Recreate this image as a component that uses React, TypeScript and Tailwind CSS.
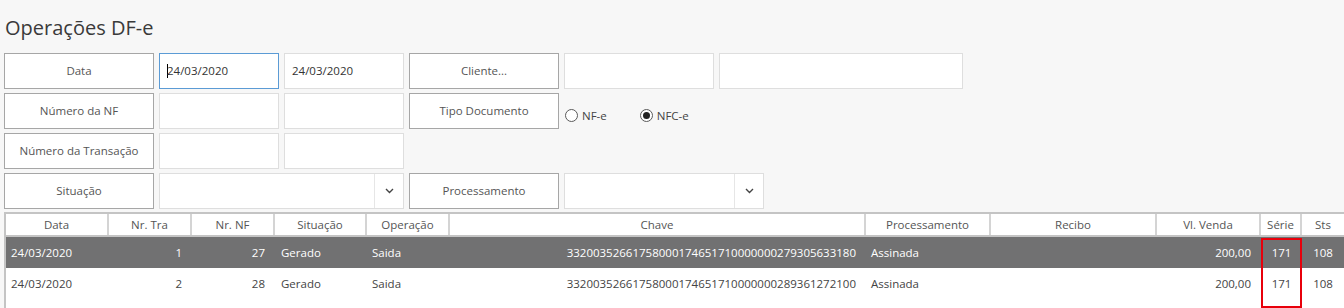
import React from "react"

const font = { fontFamily: '"Open Sans", "Noto Sans", sans-serif' }

const Label = ({ text, className = "" }: { text: string; className?: string }) => (
  <div
    className={`w-[150px] h-[36px] shrink-0 flex items-center justify-center bg-white border border-[#a6a6a6] text-[11.5px] text-[#555] ${className}`}
  >
    {text}
  </div>
)

const Input = ({ w, value, focused }: { w: string; value?: string; focused?: boolean }) => (
  <div
    className={`${w} h-[36px] shrink-0 flex items-center bg-white border ${
      focused ? "border-[#5b9bd5]" : "border-[#dedede]"
    } pl-[7px] text-[11.5px] text-[#333]`}
  >
    {focused && <span className="w-px h-[14px] bg-black -mr-px" />}
    {value}
  </div>
)

const Select = ({ w }: { w: string }) => (
  <div className={`${w} h-[36px] shrink-0 flex bg-white border border-[#dedede]`}>
    <div className="flex-1" />
    <div className="w-[29px] border-l border-[#e6e6e6] flex items-center justify-center">
      <svg width="9" height="6" viewBox="0 0 9 6">
        <polyline points="1,1 4.5,4.5 8,1" fill="none" stroke="#444" strokeWidth="1.4" />
      </svg>
    </div>
  </div>
)

const Radio = ({ label, checked }: { label: string; checked?: boolean }) => (
  <div className="flex items-center gap-[4px] text-[11.5px] text-[#444]">
    <span className="w-[13px] h-[13px] rounded-full border border-[#5a5a5a] bg-white flex items-center justify-center">
      {checked && <span className="w-[7px] h-[7px] rounded-full bg-[#222]" />}
    </span>
    {label}
  </div>
)

const cols = "grid-cols-[103px_83px_83px_92px_83px_416px_125px_166px_104px_41px_42px]"

const headers = ["Data", "Nr. Tra", "Nr. NF", "Situação", "Operação", "Chave", "Processamento", "Recibo", "Vl. Venda", "Série", "Sts"]

const align = [
  "justify-start pl-[5px]",
  "justify-end pr-[10px]",
  "justify-end pr-[10px]",
  "justify-start pl-[6px]",
  "justify-start pl-[5px]",
  "justify-end pr-[10px]",
  "justify-start pl-[5px]",
  "justify-start",
  "justify-end pr-[10px]",
  "justify-center",
  "justify-center",
]

const rows = [
  ["24/03/2020", "1", "27", "Gerado", "Saida", "33200352661758000174651710000000279305633180", "Assinada", "", "200,00", "171", "108"],
  ["24/03/2020", "2", "28", "Gerado", "Saida", "33200352661758000174651710000000289361272100", "Assinada", "", "200,00", "171", "108"],
]

export default function App() {
  return (
    <div className="w-[1344px] h-[308px] overflow-hidden bg-[#f7f7f7]" style={font}>
      <div className="h-[53px] pl-[5px] pt-[14px] text-[20px] leading-[28px] text-[#3a3a3a]">Operações DF-e</div>

      <div className="flex flex-col gap-[4px] pl-[4px]">
        <div className="flex gap-[5px]">
          <Label text="Data" />
          <Input w="w-[120px]" value="24/03/2020" focused />
          <Input w="w-[120px]" value="24/03/2020" />
          <Label text="Cliente..." />
          <Input w="w-[150px]" />
          <Input w="w-[244px]" />
        </div>
        <div className="flex gap-[5px]">
          <Label text="Número da NF" />
          <Input w="w-[120px]" />
          <Input w="w-[120px]" />
          <Label text="Tipo Documento" />
          <div className="flex items-center gap-[33px] pl-[1px] pt-[9px]">
            <Radio label="NF-e" />
            <Radio label="NFC-e" checked />
          </div>
        </div>
        <div className="flex gap-[5px]">
          <Label text="Número da Transação" />
          <Input w="w-[120px]" />
          <Input w="w-[120px]" />
        </div>
        <div className="flex gap-[5px]">
          <Label text="Situação" />
          <Select w="w-[245px]" />
          <Label text="Processamento" />
          <Select w="w-[200px]" />
        </div>
      </div>

      <div className="relative mt-[3px] ml-[4px] border-t-2 border-l-2 border-[#c4c4c4] bg-white h-[200px]">
        <div className={`grid ${cols} h-[23px] border-b-2 border-[#c4c4c4]`}>
          {headers.map((h, i) => (
            <div
              key={h}
              className={`flex items-center justify-center text-[11.5px] text-[#555] ${
                i < headers.length - 1 ? "border-r-2 border-[#d4d4d4]" : ""
              }`}
            >
              {h}
            </div>
          ))}
        </div>
        {rows.map((r, ri) => (
          <div
            key={ri}
            className={`grid ${cols} h-[31px] ${ri === 0 ? "bg-[#717172] text-white" : "bg-white text-[#444]"}`}
          >
            {r.map((c, ci) => (
              <div key={ci} className={`flex items-center text-[11.5px] ${align[ci]}`}>
                {c}
              </div>
            ))}
          </div>
        ))}
        <div className="absolute left-[1255px] top-[24px] w-[41px] h-[70px] border-2 border-[#e8000b]" />
      </div>
    </div>
  )
}
